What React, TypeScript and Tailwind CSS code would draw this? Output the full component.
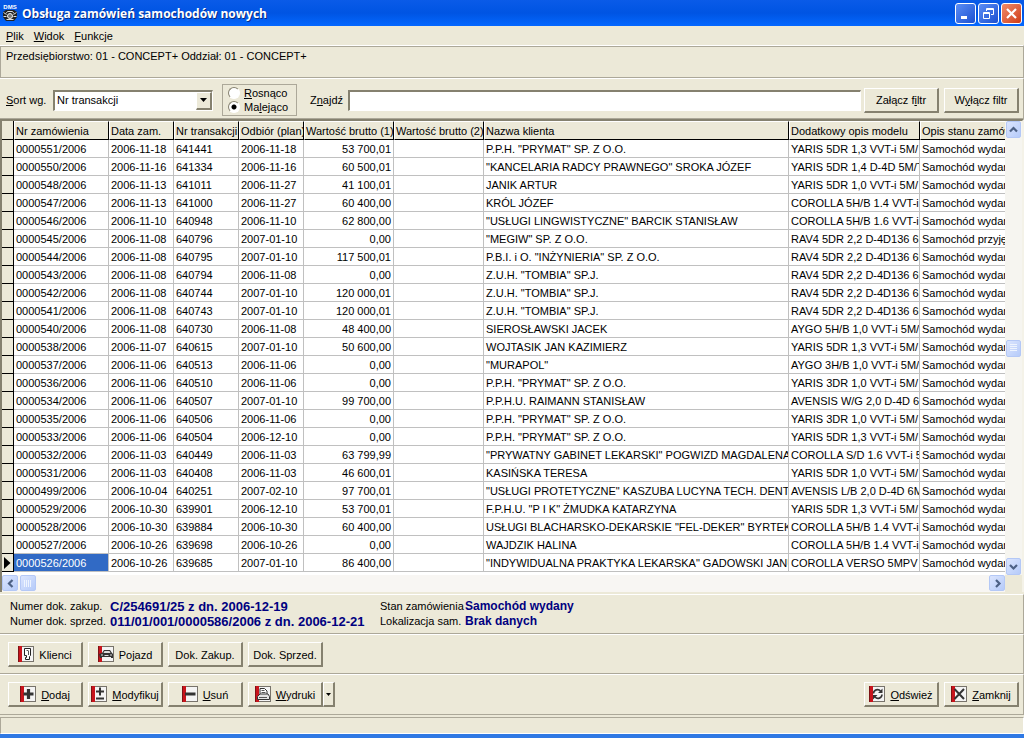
import type { ReactNode } from 'react'

type Order = {
  no: string
  date: string
  trans: string
  pickup: string
  gross: string
  client: string
  model: string
  state?: string
}

const orders: Order[] = [
  { no: '0000551/2006', date: '2006-11-18', trans: '641441', pickup: '2006-11-18', gross: '53 700,01', client: 'P.P.H. "PRYMAT" SP. Z O.O.', model: 'YARIS 5DR 1,3 VVT-i 5M/' },
  { no: '0000550/2006', date: '2006-11-16', trans: '641334', pickup: '2006-11-16', gross: '60 500,01', client: '"KANCELARIA RADCY PRAWNEGO" SROKA JÓZEF', model: 'YARIS 5DR 1,4 D-4D 5M/T' },
  { no: '0000548/2006', date: '2006-11-13', trans: '641011', pickup: '2006-11-27', gross: '41 100,01', client: 'JANIK ARTUR', model: 'YARIS 5DR 1,0 VVT-i 5M/' },
  { no: '0000547/2006', date: '2006-11-13', trans: '641000', pickup: '2006-11-27', gross: '60 400,00', client: 'KRÓL JÓZEF', model: 'COROLLA 5H/B 1.4 VVT-i' },
  { no: '0000546/2006', date: '2006-11-10', trans: '640948', pickup: '2006-11-10', gross: '62 800,00', client: '"USŁUGI LINGWISTYCZNE" BARCIK STANISŁAW', model: 'COROLLA 5H/B 1.6 VVT-i' },
  { no: '0000545/2006', date: '2006-11-08', trans: '640796', pickup: '2007-01-10', gross: '0,00', client: '"MEGIW" SP. Z O.O.', model: 'RAV4 5DR 2,2 D-4D136 6M', state: 'Samochód przyjęty' },
  { no: '0000544/2006', date: '2006-11-08', trans: '640795', pickup: '2007-01-10', gross: '117 500,01', client: 'P.B.I. i O. "INŻYNIERIA" SP. Z O.O.', model: 'RAV4 5DR 2,2 D-4D136 6M' },
  { no: '0000543/2006', date: '2006-11-08', trans: '640794', pickup: '2006-11-08', gross: '0,00', client: 'Z.U.H. "TOMBIA" SP.J.', model: 'RAV4 5DR 2,2 D-4D136 6M' },
  { no: '0000542/2006', date: '2006-11-08', trans: '640744', pickup: '2007-01-10', gross: '120 000,01', client: 'Z.U.H. "TOMBIA" SP.J.', model: 'RAV4 5DR 2,2 D-4D136 6M' },
  { no: '0000541/2006', date: '2006-11-08', trans: '640743', pickup: '2007-01-10', gross: '120 000,01', client: 'Z.U.H. "TOMBIA" SP.J.', model: 'RAV4 5DR 2,2 D-4D136 6M' },
  { no: '0000540/2006', date: '2006-11-08', trans: '640730', pickup: '2006-11-08', gross: '48 400,00', client: 'SIEROSŁAWSKI JACEK', model: 'AYGO 5H/B 1,0 VVT-i 5M/' },
  { no: '0000538/2006', date: '2006-11-07', trans: '640615', pickup: '2007-01-10', gross: '50 600,00', client: 'WOJTASIK JAN KAZIMIERZ', model: 'YARIS 5DR 1,3 VVT-i 5M/' },
  { no: '0000537/2006', date: '2006-11-06', trans: '640513', pickup: '2006-11-06', gross: '0,00', client: '"MURAPOL"', model: 'AYGO 3H/B 1,0 VVT-i 5M/' },
  { no: '0000536/2006', date: '2006-11-06', trans: '640510', pickup: '2006-11-06', gross: '0,00', client: 'P.P.H. "PRYMAT" SP. Z O.O.', model: 'YARIS 3DR 1,0 VVT-i 5M/' },
  { no: '0000534/2006', date: '2006-11-06', trans: '640507', pickup: '2007-01-10', gross: '99 700,00', client: 'P.P.H.U. RAIMANN STANISŁAW', model: 'AVENSIS W/G 2,0 D-4D 6M' },
  { no: '0000535/2006', date: '2006-11-06', trans: '640506', pickup: '2006-11-06', gross: '0,00', client: 'P.P.H. "PRYMAT" SP. Z O.O.', model: 'YARIS 3DR 1,0 VVT-i 5M/' },
  { no: '0000533/2006', date: '2006-11-06', trans: '640504', pickup: '2006-12-10', gross: '0,00', client: 'P.P.H. "PRYMAT" SP. Z O.O.', model: 'YARIS 5DR 1,3 VVT-i 5M/' },
  { no: '0000532/2006', date: '2006-11-03', trans: '640449', pickup: '2006-11-03', gross: '63 799,99', client: '"PRYWATNY GABINET LEKARSKI" POGWIZD MAGDALENA', model: 'COROLLA S/D 1.6 VVT-i 5' },
  { no: '0000531/2006', date: '2006-11-03', trans: '640408', pickup: '2006-11-03', gross: '46 600,01', client: 'KASIŃSKA TERESA', model: 'YARIS 5DR 1,0 VVT-i 5M/' },
  { no: '0000499/2006', date: '2006-10-04', trans: '640251', pickup: '2007-02-10', gross: '97 700,01', client: '"USŁUGI PROTETYCZNE" KASZUBA LUCYNA TECH. DENT', model: 'AVENSIS L/B 2,0 D-4D 6M' },
  { no: '0000529/2006', date: '2006-10-30', trans: '639901', pickup: '2006-12-10', gross: '53 700,01', client: 'F.P.H.U. "P I K" ŻMUDKA KATARZYNA', model: 'YARIS 5DR 1,3 VVT-i 5M/' },
  { no: '0000528/2006', date: '2006-10-30', trans: '639884', pickup: '2006-10-30', gross: '60 400,00', client: 'USŁUGI BLACHARSKO-DEKARSKIE "FEL-DEKER" BYRTEK', model: 'COROLLA 5H/B 1.4 VVT-i' },
  { no: '0000527/2006', date: '2006-10-26', trans: '639698', pickup: '2006-10-26', gross: '0,00', client: 'WAJDZIK HALINA', model: 'COROLLA 5H/B 1.4 VVT-i' },
  { no: '0000526/2006', date: '2006-10-26', trans: '639685', pickup: '2007-01-10', gross: '86 400,00', client: '"INDYWIDUALNA PRAKTYKA LEKARSKA" GADOWSKI JANU', model: 'COROLLA VERSO 5MPV 1' },
]

const columns = [
  'Nr zamówienia',
  'Data zam.',
  'Nr transakcji',
  'Odbiór (plan)',
  'Wartość brutto (1)',
  'Wartość brutto (2)',
  'Nazwa klienta',
  'Dodatkowy opis modelu',
  'Opis stanu zamówienia',
]

const selected = '0000526/2006'

const raised =
  'border-t border-l border-b-2 border-r-2 border-t-white border-l-white border-b-[#85816f] border-r-[#85816f] bg-[#ece9d8]'
const panel = 'border-t border-b border-r border-t-white border-b-[#aca899] border-r-[#aca899]'
const cell = 'overflow-hidden border-r border-b border-[#c0c0c0] px-[2px] pt-[2px] pb-0'
const scrollBtn =
  'flex shrink-0 items-center justify-center rounded-[2px] border border-[#b4c8f6] bg-linear-to-br from-[#dbe5fe] to-[#b6cbf9] text-[#4d6185]'

function PushButton({ icon, children }: { icon?: ReactNode; children: ReactNode }) {
  return (
    <button type="button" className={`flex h-[25px] w-[75px] shrink-0 items-center justify-center gap-[5px] whitespace-nowrap ${raised}`}>
      {icon}
      <span className="pt-[2px]">{children}</span>
    </button>
  )
}

// Common tile of the toolbar icons: white box with a red strip on the left
function Icon({ children }: { children: ReactNode }) {
  return (
    <svg width="16" height="16" viewBox="0 0 16 16" className="shrink-0" aria-hidden="true">
      <rect x="0.5" y="0.5" width="15" height="15" fill="#f4f4f4" stroke="#77736b" />
      <rect x="0" y="0" width="4" height="16" fill="#c8141c" />
      <rect x="0" y="0" width="1" height="16" fill="#7d1216" />
      {children}
    </svg>
  )
}

const PersonIcon = () => (
  <Icon>
    <path d="M6.5 2.5h6v7l-1 1v3h-4v-2h1v-2h-2z" fill="#fff" stroke="#222" />
    <path d="M8.5 4.5h2M10.5 5v4" stroke="#555" fill="none" />
  </Icon>
)

const CarIcon = () => (
  <Icon>
    <path d="M1 8l3-1 2-3h6l2 3 1 1v4h-2v-1H4v1H2z" fill="#333" />
    <path d="M6.5 5h5l1 2h-7z" fill="#ddd" />
    <path d="M3 9h2M12 9h2M6.5 9.5h4" stroke="#ddd" />
  </Icon>
)

const PlusIcon = () => (
  <Icon>
    <path d="M8.5 3v10M3.5 8h10" stroke="#333" strokeWidth="3.2" />
  </Icon>
)

const PlusMinusIcon = () => (
  <Icon>
    <path d="M9 1.5v8M5 5.5h8M5 12.5h8" stroke="#333" strokeWidth="2" />
  </Icon>
)

const MinusIcon = () => (
  <Icon>
    <path d="M3 8h10.5" stroke="#333" strokeWidth="3" />
  </Icon>
)

const PrinterIcon = () => (
  <Icon>
    <path d="M5 8V2.5h4.5L12 5v4" fill="#fff" stroke="#333" />
    <path d="M6.5 4.5h3M6.5 6.5h4" stroke="#555" />
    <path d="M2.5 10.5L5 8h8l1.5 2.5v3h-12z" fill="#e4e4e4" stroke="#333" />
    <path d="M4 11.5h8" stroke="#555" />
  </Icon>
)

const RefreshIcon = () => (
  <Icon>
    <path d="M4.5 7.5A4 4 0 0 1 11.5 5M13 8.5A4 4 0 0 1 6 11" stroke="#333" strokeWidth="1.6" fill="none" />
    <path d="M13.5 2.5v4.5h-4.5zM4 13.5V9h4.5z" fill="#333" />
  </Icon>
)

const CloseIcon = () => (
  <Icon>
    <path d="M3.5 3l9.5 10M13 3L3.5 13" stroke="#333" strokeWidth="2" />
  </Icon>
)

function Chevron({ dir }: { dir: 'up' | 'down' | 'left' | 'right' }) {
  const paths = {
    up: 'M1 6.5l3.5-3.5L8 6.5',
    down: 'M1 3l3.5 3.5L8 3',
    left: 'M6.5 1L3 4.5 6.5 8',
    right: 'M3 1l3.5 3.5L3 8',
  }
  return (
    <svg width="9" height="9" viewBox="0 0 9 9" aria-hidden="true">
      <path d={paths[dir]} fill="none" stroke="currentColor" strokeWidth="2.2" />
    </svg>
  )
}

function TitleBar() {
  const box = 'flex h-[21px] w-[21px] items-center justify-center rounded-[3px] border border-white'
  return (
    <header className="flex h-[26px] shrink-0 items-center bg-linear-to-b from-[#0a5be8] via-[#0054e3] to-[#0468ff] pr-[2px] pl-[2px]">
      <svg width="16" height="18" viewBox="0 0 16 18" className="shrink-0" aria-hidden="true">
        <text x="8" y="5" fontSize="6" fontWeight="bold" textAnchor="middle" fill="#fff" fontFamily="Liberation Sans, sans-serif">DMS</text>
        <path d="M1 8l3-2h8l3 2v5l-3 4H4l-3-4z" fill="#222" />
        <path d="M4 9.5l1.500-2h5l1.500 2M1.500 8.500l3 2M14.500 8.500l-3 2M1.500 12.500h3M11.500 12.500h3M4.500 15.500h7" fill="none" stroke="#ddd" />
        <circle cx="8" cy="12" r="2.5" fill="#777" stroke="#eee" />
      </svg>
      <h1 className="ml-1 flex-1 font-['Open_Sans',sans-serif] text-[12px] font-bold text-white [text-shadow:1px_1px_#0a2a80]">
        Obsługa zamówień samochodów nowych
      </h1>
      <div className="flex gap-[2px]">
        <button type="button" aria-label="Minimalizuj" className={`${box} bg-linear-to-br from-[#5b8df5] to-[#1c4fd0]`}>
          <svg width="13" height="13" viewBox="0 0 13 13"><path d="M2 10.5h6" stroke="#fff" strokeWidth="3" /></svg>
        </button>
        <button type="button" aria-label="Przywróć" className={`${box} bg-linear-to-br from-[#5b8df5] to-[#1c4fd0]`}>
          <svg width="13" height="13" viewBox="0 0 13 13" fill="none" stroke="#fff">
            <path d="M4.5 4V1.500h7v6H9M4.500 2.500h7M1.500 5.500h6v6h-6zM1.500 6.500h6" />
          </svg>
        </button>
        <button type="button" aria-label="Zamknij okno" className={`${box} bg-linear-to-br from-[#f08a68] to-[#cf3a10]`}>
          <svg width="13" height="13" viewBox="0 0 13 13"><path d="M2 2l9 9M11 2l-9 9" stroke="#fff" strokeWidth="2.2" /></svg>
        </button>
      </div>
    </header>
  )
}

function SortBar() {
  const radio =
    'h-3 w-3 appearance-none rounded-full border border-[#85816f] border-r-white border-b-white bg-white checked:bg-[radial-gradient(circle,#000_2px,#fff_3px)]'
  return (
    <div className={`flex h-[41px] shrink-0 items-center pt-[3px] pr-1 pl-[6px] ${panel}`}>
      <label htmlFor="sort" className="w-[47px] whitespace-nowrap"><u>S</u>ort wg.</label>
      <div className="relative h-[21px] w-[160px] shrink-0 border border-t-2 border-l-2 border-white border-t-[#85816f] border-l-[#85816f] bg-white">
        <select id="sort" className="block h-full w-full appearance-none bg-white pl-[2px] outline-none">
          <option>Nr transakcji</option>
        </select>
        <span className={`pointer-events-none absolute inset-y-0 right-0 flex w-4 items-center justify-center ${raised}`}>
          <svg width="7" height="4" viewBox="0 0 7 4"><path d="M0 0h7L3.5 4z" /></svg>
        </span>
      </div>
      <fieldset className="ml-[9px] flex h-8 w-[75px] shrink-0 flex-col justify-center border border-[#aca899] pl-[5px]">
        <label className="flex h-[14px] items-center gap-1"><input type="radio" name="dir" className={radio} /><span><u>R</u>osnąco</span></label>
        <label className="flex h-[14px] items-center gap-1"><input type="radio" name="dir" defaultChecked className={radio} /><span>Ma<u>l</u>ejąco</span></label>
      </fieldset>
      <label htmlFor="find" className="ml-[13px] w-[38px] whitespace-nowrap">Z<u>n</u>ajdź</label>
      <input
        id="find"
        type="text"
        className="h-[21px] min-w-0 flex-1 border border-t-2 border-l-2 border-white border-t-[#85816f] border-l-[#85816f] bg-white px-1 outline-none"
      />
      <div className="ml-[3px] flex gap-[5px]">
        <PushButton>Załącz f<u>i</u>ltr</PushButton>
        <PushButton>W<u>y</u>łącz filtr</PushButton>
      </div>
    </div>
  )
}

function OrdersGrid() {
  return (
    <div className="shrink-0 border-t-2 border-r-2 border-l-2 border-t-[#85816f] border-r-[#f4f2e8] border-l-[#85816f] bg-white">
      <div className="flex">
        <div className="min-w-0 flex-1 overflow-hidden pb-[3px]">
          <table className="w-full table-fixed border-separate border-spacing-0 whitespace-nowrap">
            <colgroup>
              <col className="w-3" />
              <col className="w-[95px]" />
              <col className="w-[65px]" />
              <col className="w-[65px]" />
              <col className="w-[65px]" />
              <col className="w-[90px]" />
              <col className="w-[90px]" />
              <col />
              <col className="w-[131px]" />
              <col className="w-[85px]" />
            </colgroup>
            <thead>
              <tr className="h-[19px] bg-[#ece9d8] text-left">
                <th className="border-r border-b border-black" aria-label="Wskaźnik" />
                {columns.map((name, i) => (
                  <th
                    key={name}
                    className={`overflow-hidden border-t border-b border-l border-black border-t-white border-l-white p-0 pt-px pl-px font-normal ${
                      i < columns.length - 1 ? 'border-r' : ''
                    }`}
                  >
                    {name}
                  </th>
                ))}
              </tr>
            </thead>
            <tbody>
              {orders.map((o) => (
                <tr key={o.no} className="h-[18px]">
                  <td className="border-r border-b border-black bg-[#ece9d8] p-0">
                    {o.no === selected && (
                      <svg width="7" height="12" viewBox="0 0 7 12" className="mx-auto block"><path d="M0 0l6.5 6L0 12z" /></svg>
                    )}
                  </td>
                  <td className={`${cell} ${o.no === selected ? 'bg-[#316ac5] text-white' : ''}`}>{o.no}</td>
                  <td className={cell}>{o.date}</td>
                  <td className={cell}>{o.trans}</td>
                  <td className={cell}>{o.pickup}</td>
                  <td className={`${cell} text-right`}>{o.gross}</td>
                  <td className={cell} />
                  <td className={cell}>{o.client}</td>
                  <td className={cell}>{o.model}</td>
                  <td className="overflow-hidden border-b border-[#c0c0c0] px-[2px] pt-[2px] pb-0">{o.state ?? 'Samochód wydany'}</td>
                </tr>
              ))}
            </tbody>
          </table>
        </div>
        <div className="flex w-[17px] shrink-0 flex-col items-center justify-between bg-[#f6f5f0]">
          <button type="button" aria-label="W górę" className={`h-[17px] w-[15px] ${scrollBtn}`}><Chevron dir="up" /></button>
          <span className={`h-[17px] w-[15px] ${scrollBtn}`}>
            <svg width="7" height="8" viewBox="0 0 7 8"><path d="M0 .5h7M0 2.500h7M0 4.500h7M0 6.500h7" stroke="#eef4fe" /></svg>
          </span>
          <button type="button" aria-label="W dół" className={`h-[17px] w-[15px] ${scrollBtn}`}><Chevron dir="down" /></button>
        </div>
      </div>
      <div className="flex h-[17px] bg-[#f8f6f3]">
        <button type="button" aria-label="W lewo" className={`h-[16px] w-[16px] ${scrollBtn}`}><Chevron dir="left" /></button>
        <span className={`ml-[2px] h-[16px] w-[16px] ${scrollBtn}`}>
          <svg width="8" height="7" viewBox="0 0 8 7"><path d="M.5 0v7M2.500 0v7M4.500 0v7M6.500 0v7" stroke="#eef4fe" /></svg>
        </span>
        <span className="flex-1" />
        <button type="button" aria-label="W prawo" className={`h-[16px] w-[16px] ${scrollBtn}`}><Chevron dir="right" /></button>
        <span className="w-[17px] bg-[#ece9d8]" />
      </div>
    </div>
  )
}

export default function App() {
  const docNo = 'text-[13px] font-bold text-[#000080]'
  const status = 'text-[12px] font-bold text-[#000080]'
  return (
    <div className="flex min-h-screen flex-col bg-[#ece9d8] font-['Liberation_Sans',Arial,sans-serif] text-[11px] leading-[15px] text-black">
      <TitleBar />
      <nav className="flex h-[19px] shrink-0 items-center gap-[10px] pt-[2px] pl-[6px]">
        <button type="button"><u>P</u>lik</button>
        <button type="button"><u>W</u>idok</button>
        <button type="button"><u>F</u>unkcje</button>
      </nav>
      <div className={`h-[33px] shrink-0 ${panel}`}>
        <p className="h-full border-t border-l border-[#aca899] pt-[2px] pl-[5px]">
          Przedsiębiorstwo: 01 - CONCEPT+ Oddział: 01 - CONCEPT+
        </p>
      </div>
      <SortBar />
      <OrdersGrid />
      <dl className={`mt-[2px] grid h-10 shrink-0 grid-cols-[100px_270px_85px_1fr] content-center whitespace-nowrap pl-[10px] ${panel}`}>
        <dt>Numer dok. zakup.</dt>
        <dd className={docNo}>C/254691/25 z dn. 2006-12-19</dd>
        <dt>Stan zamówienia</dt>
        <dd className={status}>Samochód wydany</dd>
        <dt>Numer dok. sprzed.</dt>
        <dd className={docNo}>011/01/001/0000586/2006 z dn. 2006-12-21</dd>
        <dt>Lokalizacja sam.</dt>
        <dd className={status}>Brak danych</dd>
      </dl>
      <div className={`flex h-10 shrink-0 items-center gap-[5px] pt-px pl-2 ${panel}`}>
        <PushButton icon={<PersonIcon />}>Klienci</PushButton>
        <PushButton icon={<CarIcon />}>Pojazd</PushButton>
        <PushButton>Dok. Zakup.</PushButton>
        <PushButton>Dok. Sprzed.</PushButton>
      </div>
      <div className={`flex h-[41px] shrink-0 items-center gap-[5px] pr-1 pl-2 ${panel}`}>
        <PushButton icon={<PlusIcon />}><u>D</u>odaj</PushButton>
        <PushButton icon={<PlusMinusIcon />}><u>M</u>odyfikuj</PushButton>
        <PushButton icon={<MinusIcon />}><u>U</u>suń</PushButton>
        <div className="flex">
          <PushButton icon={<PrinterIcon />}><u>W</u>ydruki</PushButton>
          <button type="button" aria-label="Więcej wydruków" className={`flex h-[25px] w-3 items-center justify-center ${raised}`}>
            <svg width="5" height="3" viewBox="0 0 5 3"><path d="M0 0h5L2.5 3z" /></svg>
          </button>
        </div>
        <span className="flex-1" />
        <PushButton icon={<RefreshIcon />}><u>O</u>dśwież</PushButton>
        <PushButton icon={<CloseIcon />}><u>Z</u>amknij</PushButton>
      </div>
      <footer className="mt-[2px] flex-1 border-t border-r border-b border-l border-[#aca899] border-r-white border-b-white" />
      <div className="h-1 shrink-0 bg-[#2f79e4]" />
    </div>
  )
}
